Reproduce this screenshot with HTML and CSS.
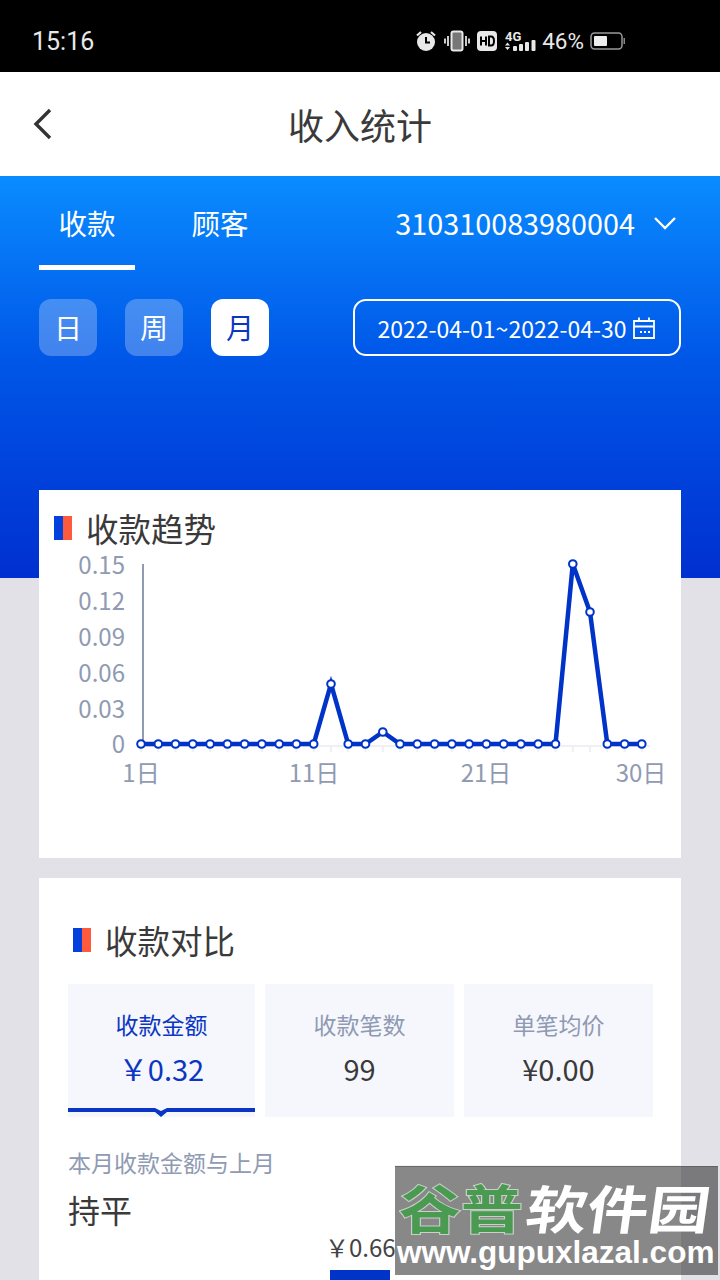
FILE: index.html
```html
<!DOCTYPE html>
<html lang="zh-CN">
<head>
<meta charset="utf-8">
<title>收入统计</title>
<link rel="stylesheet" href="styles.css">
</head>
<body>
<div class="page">
  <div class="status">
    <span class="time">15:16</span>
    <div class="status-icons">
      <svg class="ic-alarm" width="22" height="22" viewBox="0 0 22 22"><circle cx="11" cy="12" r="9" fill="#e8e8e8"/><path d="M11 7v5.500h4" stroke="#000" stroke-width="2" fill="none"/><path d="M2 5.500 6 2M20 5.500 16 2" stroke="#e8e8e8" stroke-width="2.200"/></svg>
      <svg class="ic-vib" width="26" height="22" viewBox="0 0 26 22"><rect x="7.500" y="1.500" width="11" height="19" rx="2" fill="#777" stroke="#e8e8e8" stroke-width="2"/><path d="M4 6v10M1 8.500v5M22 6v10M25 8.500v5" stroke="#ccc" stroke-width="2"/></svg>
      <svg class="ic-hd" width="20" height="20" viewBox="0 0 20 20"><rect width="20" height="20" rx="4" fill="#e8e8e8"/><path d="M4 5.500v9M9 5.500v9M4 10h5M12 5.500v9h2c2 0 3-1.500 3-4.500s-1-4.500-3-4.500z" stroke="#000" stroke-width="2" fill="none"/></svg>
      <svg class="ic-net" width="31" height="22" viewBox="0 0 31 22"><text x="0" y="10.500" class="net-4g">4G</text><path d="M0 15.500l2.500-3 2.500 3zM0 17l2.500 3 2.500-3z" fill="#e8e8e8"/><rect x="8" y="16" width="4" height="5" rx="1" fill="#e8e8e8"/><rect x="14" y="14" width="4" height="7" rx="1" fill="#e8e8e8"/><rect x="20" y="12" width="4" height="9" rx="1" fill="#e8e8e8"/><rect x="26.500" y="10" width="4" height="11" rx="1" fill="#e8e8e8"/></svg>
      <span class="pct">46%</span>
      <svg class="ic-bat" width="36" height="18" viewBox="0 0 36 18"><rect x="1" y="1" width="31" height="16" rx="3.500" fill="none" stroke="#999" stroke-width="1.500"/><rect x="4" y="4" width="13" height="10" rx="1" fill="#eee"/><rect x="33.500" y="6" width="1.500" height="6" fill="#888"/></svg>
    </div>
  </div>

  <header class="nav">
    <svg class="back" width="20" height="32" viewBox="0 0 20 32"><path d="M18 2 4 16l14 14" fill="none" stroke="#333" stroke-width="3.400"/></svg>
    <h1 class="nav-title">收入统计</h1>
  </header>

  <section class="hero">
    <div class="tabs">
      <div class="tab tab-on">收款</div>
      <div class="tab">顾客</div>
      <div class="merchant">
        <span>310310083980004</span>
        <svg width="24" height="14" viewBox="0 0 24 14"><path d="M2 2l10 10L22 2" fill="none" stroke="#fff" stroke-width="2.400"/></svg>
      </div>
    </div>
    <div class="filters">
      <div class="period">日</div>
      <div class="period">周</div>
      <div class="period period-on">月</div>
      <div class="range">
        <span>2022-04-01~2022-04-30</span>
        <svg width="24" height="24" viewBox="0 0 24 24"><path d="M2 5h20v17H2zM2 10.500h20M7 1.500V6M17 1.500V6" fill="none" stroke="#fff" stroke-width="1.800"/><path d="M8 16h2M12 16h2M16 16h2" stroke="#fff" stroke-width="1.800"/></svg>
      </div>
    </div>
  </section>

  <main class="content">
    <section class="card card-trend">
      <h2 class="trend-title"><i class="mark"></i>收款趋势</h2>
      <svg class="chart" width="642" height="306" viewBox="39 552 642 306">
        <g class="y-labels">
          <text x="125" y="574">0.15</text>
          <text x="125" y="610">0.12</text>
          <text x="125" y="646">0.09</text>
          <text x="125" y="682">0.06</text>
          <text x="125" y="718">0.03</text>
          <text x="125" y="753">0</text>
        </g>
        <path class="axis-y" d="M143 564V744"/>
        <path class="axis-x" d="M141 746H650M141 746v6M158.300 746v6M175.500 746v6M192.800 746v6M210.100 746v6M227.400 746v6M244.600 746v6M261.900 746v6M279.200 746v6M296.400 746v6M313.700 746v6M331 746v6M348.200 746v6M365.500 746v6M382.800 746v6M400 746v6M417.300 746v6M434.600 746v6M451.900 746v6M469.100 746v6M486.400 746v6M503.700 746v6M520.900 746v6M538.200 746v6M555.500 746v6M572.800 746v6M590 746v6M607.300 746v6M624.600 746v6M641.800 746v6"/>
        <g class="x-labels">
          <text x="141" y="782">1日</text>
          <text x="314" y="782">11日</text>
          <text x="486" y="782">21日</text>
          <text x="641" y="782">30日</text>
        </g>
        <polyline class="line" points="141,744 158.300,744 175.500,744 192.800,744 210.100,744 227.400,744 244.600,744 261.900,744 279.200,744 296.400,744 313.700,744 331,684 348.200,744 365.500,744 382.800,732 400,744 417.300,744 434.600,744 451.900,744 469.100,744 486.400,744 503.700,744 520.900,744 538.200,744 555.500,744 572.800,564 590,612 607.300,744 624.600,744 641.800,744"/>
        <g class="dots">
          <circle cx="141" cy="744" r="3.800"/><circle cx="158.300" cy="744" r="3.800"/><circle cx="175.500" cy="744" r="3.800"/><circle cx="192.800" cy="744" r="3.800"/><circle cx="210.100" cy="744" r="3.800"/><circle cx="227.400" cy="744" r="3.800"/><circle cx="244.600" cy="744" r="3.800"/><circle cx="261.900" cy="744" r="3.800"/><circle cx="279.200" cy="744" r="3.800"/><circle cx="296.400" cy="744" r="3.800"/><circle cx="313.700" cy="744" r="3.800"/><circle cx="331" cy="684" r="3.800"/><circle cx="348.200" cy="744" r="3.800"/><circle cx="365.500" cy="744" r="3.800"/><circle cx="382.800" cy="732" r="3.800"/><circle cx="400" cy="744" r="3.800"/><circle cx="417.300" cy="744" r="3.800"/><circle cx="434.600" cy="744" r="3.800"/><circle cx="451.900" cy="744" r="3.800"/><circle cx="469.100" cy="744" r="3.800"/><circle cx="486.400" cy="744" r="3.800"/><circle cx="503.700" cy="744" r="3.800"/><circle cx="520.900" cy="744" r="3.800"/><circle cx="538.200" cy="744" r="3.800"/><circle cx="555.500" cy="744" r="3.800"/><circle cx="572.800" cy="564" r="3.800"/><circle cx="590" cy="612" r="3.800"/><circle cx="607.300" cy="744" r="3.800"/><circle cx="624.600" cy="744" r="3.800"/><circle cx="641.800" cy="744" r="3.800"/>
        </g>
      </svg>
    </section>

    <section class="card card-compare">
      <h2 class="compare-title"><i class="mark"></i>收款对比</h2>
      <div class="metrics">
        <div class="metric metric-on"><div class="metric-label">收款金额</div><div class="metric-value">￥0.32</div></div>
        <div class="metric"><div class="metric-label">收款笔数</div><div class="metric-value">99</div></div>
        <div class="metric"><div class="metric-label">单笔均价</div><div class="metric-value">¥0.00</div></div>
      </div>
      <p class="note">本月收款金额与上月</p>
      <p class="flat">持平</p>
      <div class="bar-area">
        <div class="bar-col">
          <span class="bar-value">￥0.66</span>
          <div class="bar"></div>
        </div>
      </div>
    </section>
  </main>

  <div class="watermark">
    <div class="wm-cn"><span class="wm-green">谷普</span><span class="wm-white">软件园</span></div>
    <div class="wm-url">www.gupuxlazal.com</div>
  </div>
</div>
</body>
</html>
```

FILE: styles.css
```css
* { box-sizing: border-box; margin: 0; padding: 0; }
html, body { width: 720px; height: 1280px; overflow: hidden; }
body { font-family: "Noto Sans CJK SC", "Noto Sans", sans-serif; background: #e2e1e7; }
.page { position: relative; width: 720px; height: 1280px; overflow: hidden; }

.status { height: 72px; background: #000; color: #e8e8e8; display: flex; align-items: center; justify-content: space-between; padding: 10px 94px 0 32px; }
.time { font: 400 25px/1 "Roboto", sans-serif; }
.status-icons { display: flex; align-items: center; }
.ic-alarm { margin-right: 7px; }
.ic-vib { margin-right: 7px; }
.ic-hd { margin-right: 8px; }
.ic-net { margin-right: 6px; }
.net-4g { font: 700 13px "Roboto", sans-serif; fill: #e8e8e8; }
.pct { font: 400 22.500px/1 "Roboto", sans-serif; margin-right: 6px; }

.nav { height: 104px; background: #fff; display: flex; align-items: center; justify-content: center; position: relative; }
.nav-title { font-size: 36px; font-weight: 400; color: #3a3a3a; line-height: 1; }
.back { position: absolute; left: 32px; top: 36px; }

.hero { height: 402px; padding: 18px 39px 0; background: linear-gradient(180deg, #0a8cff 0%, #0057e8 45%, #0030d0 100%); color: #fff; }
.tabs { display: flex; align-items: flex-start; height: 76px; }
.tab { width: 96px; height: 76px; margin-right: 37px; font-size: 28.500px; line-height: 58px; text-align: center; }
.tab-on { border-bottom: 5px solid #fff; }
.merchant { margin-left: auto; display: flex; align-items: center; gap: 18px; height: 57px; font-size: 28.800px; padding-right: 5px; }
.merchant svg { margin-right: -1px; }
.filters { display: flex; align-items: flex-start; margin-top: 29px; }
.period { width: 58px; height: 57px; margin-right: 28px; border-radius: 12px; background: rgba(255,255,255,.26); font-size: 28px; line-height: 57px; text-align: center; }
.period-on { background: #fff; color: #0b36c4; }
.range { margin-left: auto; width: 328px; height: 57px; border: 2px solid #fff; border-radius: 13px; display: flex; align-items: center; justify-content: center; gap: 6px; font-size: 23px; }

.content { margin: -88px 39px 0; display: flex; flex-direction: column; gap: 20px; }
.card { background: #fff; }
.card-trend { height: 368px; }
.mark { display: inline-block; width: 18px; height: 24px; margin-right: 14px; background: linear-gradient(90deg, #0440dc 0 50%, #ff5a3c 50% 100%); }
.trend-title, .compare-title { display: flex; align-items: center; font-size: 32.500px; font-weight: 400; color: #3a3a3a; line-height: 44px; }
.trend-title { padding: 16px 0 0 15px; }
.chart { display: block; margin-top: 2px; }
.y-labels text { font-size: 24px; fill: #8f9ab3; text-anchor: end; font-family: "Noto Sans CJK SC", sans-serif; }
.x-labels text { font-size: 24px; fill: #8f9ab3; text-anchor: middle; font-family: "Noto Sans CJK SC", sans-serif; }
.axis-y { stroke: #8f9ab3; stroke-width: 2; fill: none; }
.axis-x { stroke: #eef0f5; stroke-width: 2; fill: none; }
.line { fill: none; stroke: #0033c8; stroke-width: 4.500; }
.dots circle { fill: #fff; stroke: #0033c8; stroke-width: 2; }

.card-compare { height: 500px; padding: 40px 29px 0; }
.compare-title { padding-left: 5px; }
.metrics { display: grid; grid-template-columns: 187px 189px 189px; gap: 10px; margin-top: 22px; }
.metric { height: 133px; background: #f6f7fc; text-align: center; padding-top: 23px; position: relative; }
.metric-label { font-size: 23px; line-height: 34px; color: #8f9ab3; }
.metric-value { font-size: 29px; line-height: 44px; color: #3a3a3a; margin-top: 5px; }
.metric-on .metric-label, .metric-on .metric-value { color: #0b36c4; }
.metric-on::after { content: ""; position: absolute; left: 0; right: 0; bottom: 0; height: 9px; background: #0b36c4; clip-path: polygon(0 0, 87px 0, 93px 3px, 99px 0, 100% 0, 100% 4px, 99px 4px, 93px 9px, 87px 4px, 0 4px); }
.note { font-size: 23px; line-height: 32px; color: #8f9ab3; margin-top: 29px; }
.flat { font-size: 32px; line-height: 46px; color: #3a3a3a; margin-top: 8px; }
.bar-area { padding-left: 262px; margin-top: -2px; }
.bar-col { width: 90px; }
.bar-value { display: block; margin-left: -5px; font-size: 24px; line-height: 34px; color: #444; white-space: nowrap; }
.bar { width: 60px; height: 60px; margin-top: 6px; background: #0033c8; }

.watermark { position: absolute; left: 395px; top: 1166px; width: 323px; height: 109px; background: rgba(30,30,30,.53); border-top: 1px solid rgba(60,60,60,.4); box-shadow: 0 -1px 0 rgba(230,230,230,.5); color: #fff; font-weight: 700; overflow: hidden; }
.wm-cn { display: flex; height: 69px; padding: 5px 0 0 4px; font-size: 52px; line-height: 69px; white-space: nowrap; }
.wm-green { color: #4a9a52; -webkit-text-stroke: 2px #c8d0c8; paint-order: stroke fill; transform: scaleX(1.19); transform-origin: left center; width: 128px; }
.wm-white { transform: skewX(-8deg) scaleX(1.18); transform-origin: left center; }
.wm-url { font: 700 31.500px/32px "Liberation Sans", sans-serif; padding-left: 2px; white-space: nowrap; }
```
